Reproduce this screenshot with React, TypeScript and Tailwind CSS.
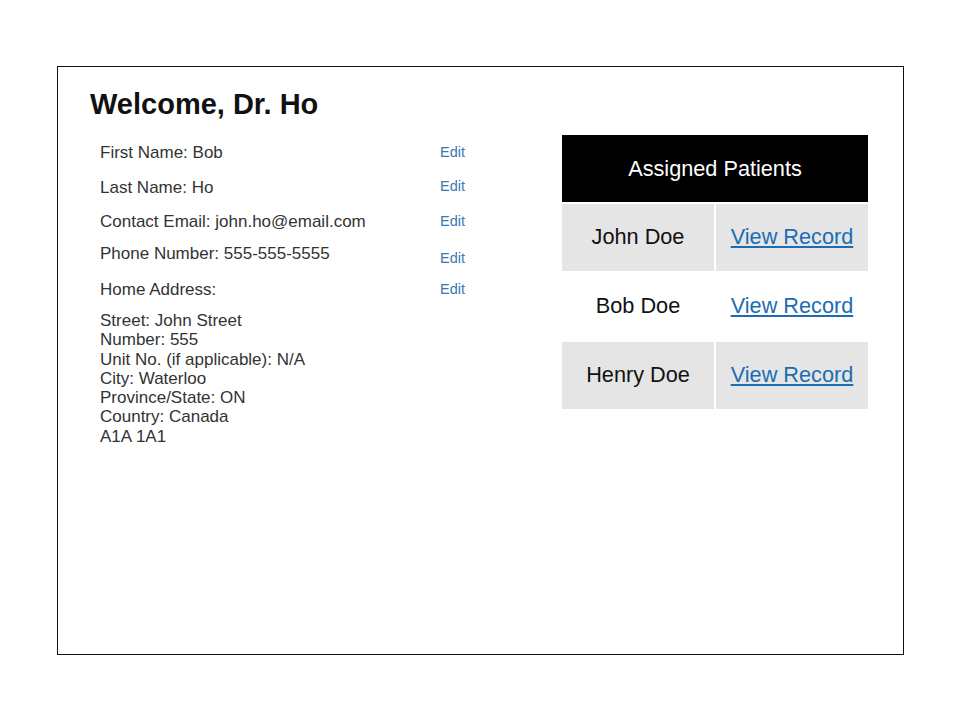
import React from "react";

const rows = [
  { label: "First Name: Bob", h: "h-[35px]", em: "mt-[0.5px]" },
  { label: "Last Name: Ho", h: "h-[34px]", em: "mt-[-0.5px]" },
  { label: "Contact Email: john.ho@email.com", h: "h-[32px]", em: "mt-[0.5px]" },
  { label: "Phone Number: 555-555-5555", h: "h-[36px]", em: "mt-[5.5px]" },
  { label: "Home Address:", h: "h-[31px]", em: "mt-[0.5px]" },
];

const address = [
  "Street: John Street",
  "Number: 555",
  "Unit No. (if applicable): N/A",
  "City: Waterloo",
  "Province/State: ON",
  "Country: Canada",
  "A1A 1A1",
];

const patients = [
  { name: "John Doe", gray: true },
  { name: "Bob Doe", gray: false },
  { name: "Henry Doe", gray: true },
];

export default function App() {
  return (
    <div
      className="w-[960px] h-[720px] bg-white pt-[66px] pl-[57px]"
      style={{ fontFamily: '"Liberation Sans", Arial, sans-serif' }}
    >
      <div className="w-[847px] h-[589px] border border-[#111] flex">
        <div className="w-[504px] pl-[32px] pt-[21px]">
          <h1 className="text-[29px] leading-[33px] font-bold text-[#111]">Welcome, Dr. Ho</h1>
          <div className="pl-[10px] pt-[22px] text-[#333]">
            {rows.map((r) => (
              <div key={r.label} className={`flex ${r.h}`}>
                <div className="w-[340px] text-[17px] leading-[19.5px]">{r.label}</div>
                <a className={`${r.em} text-[14.5px] leading-[17px] text-[#3a78b0]`}>Edit</a>
              </div>
            ))}
            <div className="text-[17px] leading-[19.3px]">
              {address.map((a) => (
                <div key={a}>{a}</div>
              ))}
            </div>
          </div>
        </div>
        <div className="pt-[68px]">
          <div className="w-[306px] grid grid-cols-2 gap-[2px]">
            <div className="col-span-2 h-[67px] pt-[1px] bg-black text-white text-[21.7px] flex items-center justify-center">
              Assigned Patients
            </div>
            {patients.map((p) => (
              <React.Fragment key={p.name}>
                <div
                  className={`h-[67px] flex items-center justify-center text-[21.7px] text-[#111] ${
                    p.gray ? "bg-[#e5e5e5]" : "bg-white"
                  }`}
                >
                  {p.name}
                </div>
                <div
                  className={`h-[67px] flex items-center justify-center text-[21.7px] ${
                    p.gray ? "bg-[#e5e5e5]" : "bg-white"
                  }`}
                >
                  <a className="text-[#1a6db3] underline">View Record</a>
                </div>
              </React.Fragment>
            ))}
          </div>
        </div>
      </div>
    </div>
  );
}
